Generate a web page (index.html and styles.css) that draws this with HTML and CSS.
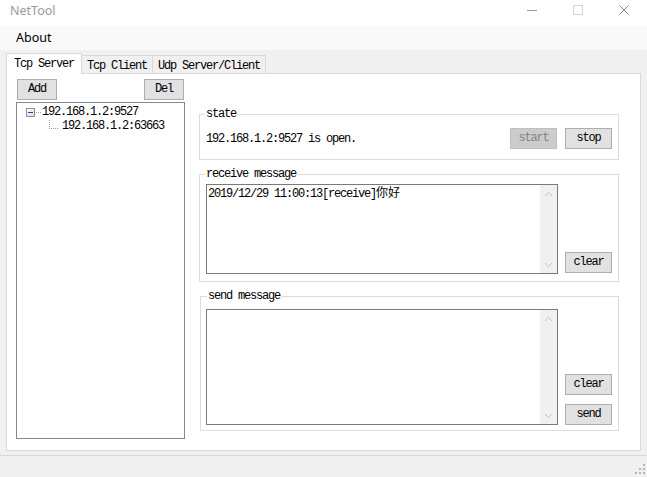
FILE: index.html
```html
<!DOCTYPE html>
<html>
<head>
<meta charset="utf-8">
<title>NetTool</title>
<link rel="stylesheet" href="styles.css">
</head>
<body>
<div class="window">
  <div class="titlebar">
    <span class="title">NetTool</span>
    <div class="controls">
      <span class="ctl"><svg width="10" height="10" viewBox="0 0 10 10"><rect x="0" y="5" width="10" height="1" fill="#999"/></svg></span>
      <span class="ctl"><svg width="10" height="10" viewBox="0 0 10 10"><rect x="0.5" y="0.5" width="9" height="9" fill="none" stroke="#d4d4d4"/></svg></span>
      <span class="ctl"><svg width="10" height="10" viewBox="0 0 10 10"><path d="M0.5 0.5 L9.5 9.5 M9.5 0.5 L0.5 9.5" stroke="#8a8a8a" stroke-width="1" fill="none"/></svg></span>
    </div>
  </div>
  <div class="menubar"><span class="menu-item">About</span></div>
  <div class="main">
    <div class="tabs">
      <div class="tab active">Tcp Server</div>
      <div class="tab">Tcp Client</div>
      <div class="tab">Udp Server/Client</div>
    </div>
    <div class="tabpage">
      <div class="left">
        <div class="btnrow">
          <button class="btn small">Add</button>
          <button class="btn small">Del</button>
        </div>
        <div class="tree">
          <div class="node root">
            <svg class="twig" width="16" height="14" viewBox="0 0 16 14">
              <defs><linearGradient id="bx" x1="0" y1="0" x2="1" y2="1"><stop offset="0" stop-color="#ffffff"/><stop offset="1" stop-color="#d8d8d8"/></linearGradient></defs>
              <rect x="0.5" y="3.5" width="8" height="8" fill="url(#bx)" stroke="#8f8f8f"/>
              <rect x="2" y="7" width="5" height="1" fill="#1e4aa0"/>
              <rect x="10" y="7" width="1" height="1" fill="#a0a0a0"/>
              <rect x="12" y="7" width="1" height="1" fill="#a0a0a0"/>
              <rect x="14" y="7" width="1" height="1" fill="#a0a0a0"/>
            </svg>
            <span>192.168.1.2:9527</span>
          </div>
          <div class="node child">
            <svg class="twig" width="20" height="14" viewBox="0 0 20 14">
              <rect x="7" y="1" width="1" height="1" fill="#a0a0a0"/>
              <rect x="7" y="3" width="1" height="1" fill="#a0a0a0"/>
              <rect x="7" y="5" width="1" height="1" fill="#a0a0a0"/>
              <rect x="7" y="7" width="1" height="1" fill="#a0a0a0"/>
              <rect x="7" y="9" width="1" height="1" fill="#a0a0a0"/>
              <rect x="9" y="9" width="1" height="1" fill="#a0a0a0"/>
              <rect x="11" y="9" width="1" height="1" fill="#a0a0a0"/>
              <rect x="13" y="9" width="1" height="1" fill="#a0a0a0"/>
              <rect x="15" y="9" width="1" height="1" fill="#a0a0a0"/>
            </svg>
            <span>192.168.1.2:63663</span>
          </div>
        </div>
      </div>
      <div class="right">
        <fieldset class="group">
          <legend>state</legend>
          <div class="state-row">
            <span class="state-text">192.168.1.2:9527 is open.</span>
            <button class="btn wide disabled">start</button>
            <button class="btn wide">stop</button>
          </div>
        </fieldset>
        <fieldset class="group recv">
          <legend>receive message</legend>
          <div class="msg-row recv-row">
            <div class="textbox recv-box">
              <div class="content">2019/12/29 11:00:13[receive]<span class="cjk">你好</span></div>
              <div class="scroll">
                <svg width="17" height="17" viewBox="0 0 17 17"><polyline points="5,11 8.5,7.5 12,11" fill="none" stroke="#c2c2c2" stroke-width="1"/></svg>
                <svg width="17" height="17" viewBox="0 0 17 17"><polyline points="5,7 8.5,10.5 12,7" fill="none" stroke="#c2c2c2" stroke-width="1"/></svg>
              </div>
            </div>
            <button class="btn wide lift">clear</button>
          </div>
        </fieldset>
        <fieldset class="group send">
          <legend>send message</legend>
          <div class="msg-row send-row">
            <div class="textbox send-box">
              <div class="content"></div>
              <div class="scroll">
                <svg width="17" height="17" viewBox="0 0 17 17"><polyline points="5,11 8.5,7.5 12,11" fill="none" stroke="#c2c2c2" stroke-width="1"/></svg>
                <svg width="17" height="17" viewBox="0 0 17 17"><polyline points="5,7 8.5,10.5 12,7" fill="none" stroke="#c2c2c2" stroke-width="1"/></svg>
              </div>
            </div>
            <div class="btncol">
              <button class="btn wide">clear</button>
              <button class="btn wide">send</button>
            </div>
          </div>
        </fieldset>
      </div>
    </div>
  </div>
  <div class="statusbar">
    <svg width="10" height="10" viewBox="0 0 10 10">
      <rect x="8" y="0" width="2" height="2" fill="#b4b4b4"/>
      <rect x="4" y="4" width="2" height="2" fill="#b4b4b4"/>
      <rect x="8" y="4" width="2" height="2" fill="#b4b4b4"/>
      <rect x="0" y="8" width="2" height="2" fill="#b4b4b4"/>
      <rect x="4" y="8" width="2" height="2" fill="#b4b4b4"/>
      <rect x="8" y="8" width="2" height="2" fill="#b4b4b4"/>
    </svg>
  </div>
</div>
</body>
</html>
```
FILE: styles.css
```css
* { box-sizing: border-box; }
html, body { margin: 0; padding: 0; }
body {
  width: 647px;
  height: 477px;
  overflow: hidden;
  background: #f0f0f0;
  font-family: "Liberation Mono", "Noto Sans CJK SC", monospace;
  font-size: 12px;
  letter-spacing: -1.2px;
  color: #000;
}
.window { width: 647px; height: 477px; display: flex; flex-direction: column; }

.titlebar { height: 26px; flex: none; background: #fff; display: flex; justify-content: space-between; }
.title {
  font-family: "Noto Sans", sans-serif;
  font-size: 12.5px;
  letter-spacing: 0;
  color: #9a9a9a;
  line-height: 22px;
  padding-left: 10px;
}
.controls { display: flex; }
.ctl { width: 46px; height: 20px; display: flex; justify-content: center; align-items: flex-start; padding-top: 5px; }
.ctl svg { display: block; }

.menubar { height: 24px; flex: none; background: #f9f9f9; display: flex; }
.menu-item {
  font-family: "Noto Sans", sans-serif;
  font-size: 12.5px;
  letter-spacing: 0;
  line-height: 24px;
  padding-left: 16px;
}

.main { height: 405px; flex: none; padding: 3px 6px 0; display: flex; flex-direction: column; }
.tabs { display: flex; align-items: flex-end; height: 20px; flex: none; }
.tab {
  height: 18px;
  padding: 4px 5px 0;
  line-height: 12px;
  border-top: 1px solid #d9d9d9;
  border-right: 1px solid #d9d9d9;
  background: #f0f0f0;
  white-space: nowrap;
}
.tab.active {
  height: 21px;
  margin-bottom: -1px;
  padding: 4px 7px 0;
  border-left: 1px solid #d9d9d9;
  background: #fff;
  position: relative;
  z-index: 1;
}
.tabpage {
  height: 378px;
  flex: none;
  border: 1px solid #d9d9d9;
  background: #fff;
  display: flex;
  align-items: flex-start;
}

.left { width: 178px; flex: none; padding: 5px 0 0 9px; }
.btnrow { display: flex; justify-content: space-between; padding: 0 1px; height: 21px; }
.btn {
  height: 21px;
  padding: 0;
  margin: 0;
  border: 1px solid #adadad;
  background: #e1e1e1;
  font: inherit;
  letter-spacing: inherit;
  color: #000;
  line-height: 19px;
  text-align: center;
}
.btn.small { width: 40px; }
.btn.wide { width: 47px; flex: none; }
.btn.disabled { background: #cccccc; border-color: #bfbfbf; color: #838383; }

.tree {
  margin-top: 2px;
  width: 169px;
  height: 337px;
  border: 1px solid #828790;
  padding-top: 2px;
  background: #fff;
}
.node { display: flex; height: 14px; line-height: 14px; align-items: flex-start; white-space: nowrap; }
.node.root { padding-left: 9px; }
.node.child { padding-left: 25px; }
.twig { display: block; flex: none; }

.right { width: 420px; flex: none; margin-left: 14px; padding-top: 34px; }
.group { margin: 0; padding: 0; border: 1px solid #dcdcdc; min-width: 0; }
.group legend { padding: 0 1px; margin-left: 5px; line-height: 12px; }
.state-row { display: flex; align-items: center; padding: 8px 6px 10px; }
.state-text { flex: 1; line-height: 14px; }
.state-row .btn + .btn { margin-left: 8px; }

.group.recv { margin-top: 8px; }
.group.send { margin-top: 8px; margin-left: 1px; width: 419px; }
.group.send legend { margin-left: 6px; }

.msg-row { display: flex; align-items: flex-end; gap: 7px; }
.recv-row { padding: 4px 6px 7px; }
.send-row { padding: 7px 6px 5px 5px; }
.btn.lift { margin-bottom: 1px; }
.btncol { display: flex; flex-direction: column; gap: 9px; }

.textbox { width: 352px; flex: none; border: 1px solid #7a7a7a; background: #fff; display: flex; }
.recv-box { height: 90px; }
.send-box { height: 116px; }
.textbox .content { flex: 1; padding: 3px 1px; line-height: 13px; white-space: nowrap; }
.cjk { font-size: 12px; letter-spacing: 0; }
.scroll { width: 17px; flex: none; background: #f0f0f0; display: flex; flex-direction: column; justify-content: space-between; }
.scroll svg { display: block; }

.statusbar {
  height: 22px;
  flex: none;
  border-top: 1px solid #d7d7d7;
  display: flex;
  justify-content: flex-end;
  align-items: flex-end;
  padding: 0 2px 3px 0;
}
.statusbar svg { display: block; }
```
